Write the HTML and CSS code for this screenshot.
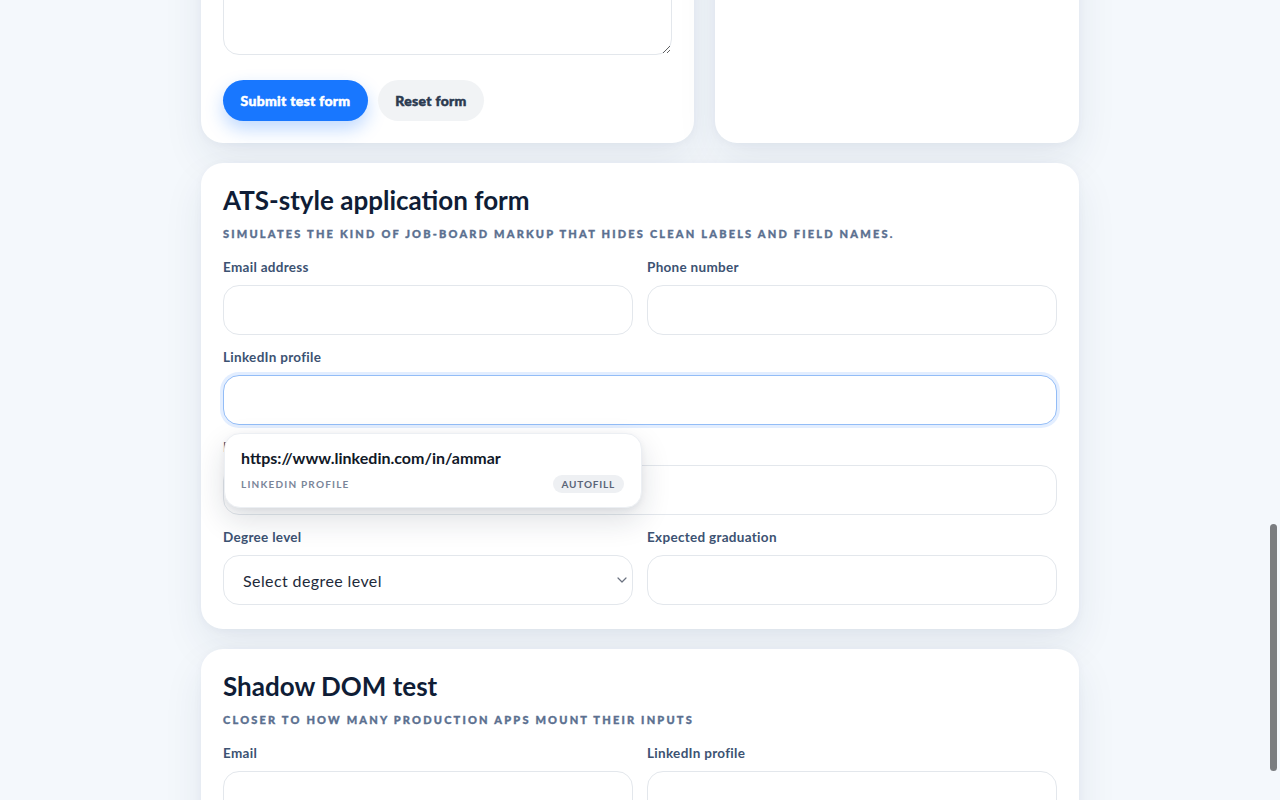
FILE: index.html
```html
<!DOCTYPE html>
<html lang="en">
<head>
    <meta charset="UTF-8">
    <meta name="viewport" content="width=device-width, initial-scale=1.0">
    <title>Autofill Test Forms</title>
    <link rel="stylesheet" href="styles.css">
</head>
<body>
    <main class="page">
        <!-- basic form + side panel -->
        <div class="top-row">
            <section class="card card-form">
                <textarea class="field-area" name="notes"></textarea>
                <div class="actions">
                    <button class="btn btn-primary" type="submit">Submit test form</button>
                    <button class="btn btn-ghost" type="reset">Reset form</button>
                </div>
            </section>
            <aside class="card card-side"></aside>
        </div>

        <section class="card">
            <h2>ATS-style application form</h2>
            <p class="subtitle">Simulates the kind of job-board markup that hides clean labels and field names.</p>
            <div class="fields">
                <div class="field">
                    <label>Email address</label>
                    <input type="text">
                </div>
                <div class="field">
                    <label>Phone number</label>
                    <input type="text">
                </div>
                <div class="field wide has-suggest">
                    <label>LinkedIn profile</label>
                    <input type="text" class="is-focused">
                    <div class="suggest">
                        <div class="suggest-value">https://www.linkedin.com/in/ammar</div>
                        <div class="suggest-meta">
                            <span class="suggest-label">LinkedIn profile</span>
                            <span class="badge">Autofill</span>
                        </div>
                    </div>
                </div>
                <div class="field wide">
                    <label>Portfolio website</label>
                    <input type="text">
                </div>
                <div class="field">
                    <label>Degree level</label>
                    <div class="select-wrap">
                        <select>
                            <option>Select degree level</option>
                        </select>
                        <svg class="chevron" width="10" height="6" viewBox="0 0 10 6"><path d="M1 1l4 4 4-4" fill="none" stroke="#6b7280" stroke-width="1.2" stroke-linecap="round" stroke-linejoin="round"/></svg>
                    </div>
                </div>
                <div class="field">
                    <label>Expected graduation</label>
                    <input type="text">
                </div>
            </div>
        </section>

        <section class="card">
            <h2>Shadow DOM test</h2>
            <p class="subtitle">Closer to how many production apps mount their inputs</p>
            <div class="fields">
                <div class="field">
                    <label>Email</label>
                    <input type="text">
                </div>
                <div class="field">
                    <label>LinkedIn profile</label>
                    <input type="text">
                </div>
            </div>
        </section>
    </main>
    <div class="scroll-thumb"></div>
</body>
</html>
```

FILE: styles.css
```css
html, body {
    height: 100%;
    overflow: hidden;
}
body {
    font-family: 'Lato', 'Noto Sans', sans-serif;
    margin: 0;
    padding: 0;
    background-color: #f4f8fc;
    color: #0f1d36;
}
.page {
    width: 878px;
    margin: -87px auto 0; /* page is scrolled down a bit */
    display: flex;
    flex-direction: column;
    gap: 20px;
}
.top-row {
    display: grid;
    grid-template-columns: minmax(0, 493fr) minmax(0, 364fr);
    gap: 21px;
}
.card {
    background: #ffffff;
    border-radius: 22px;
    padding: 22px 22px 24px;
    box-shadow: 0 18px 40px rgba(30, 50, 90, 0.08), 0 2px 8px rgba(30, 50, 90, 0.04);
}
.card-form {
    padding: 22px;
}
.field-area {
    display: block;
    box-sizing: border-box;
    width: 100%;
    height: 120px;
    border: 1px solid #e3e7ec;
    border-radius: 16px;
    resize: vertical;
    font-family: inherit;
    outline: none;
}
.actions {
    display: flex;
    gap: 10px;
    margin-top: 25px;
}
.btn {
    height: 41px;
    border: none;
    border-radius: 999px;
    font-family: 'Lato', sans-serif;
    font-weight: 900;
    font-size: 14px;
    letter-spacing: 0.3px;
    -webkit-text-stroke: 0.5px currentColor; /* extra heavy look */
    cursor: pointer;
}
.btn-primary {
    width: 145px;
    background-color: #1877ff;
    color: white;
    box-shadow: 0 8px 18px rgba(24, 119, 255, 0.28);
}
.btn-ghost {
    width: 106px;
    background-color: #f1f3f5;
    color: #2b3a50;
}
h2 {
    margin: 0;
    font-size: 26px;
    line-height: 30px;
    font-weight: 700;
    color: #0f1d36;
}
.subtitle {
    margin: 12px 0 0;
    font-size: 11px;
    line-height: 14px;
    font-weight: 900;
    letter-spacing: 2.2px;
    -webkit-text-stroke: 0.35px currentColor;
    text-transform: uppercase;
    color: #5b7090;
}
.fields {
    margin-top: 18px;
    display: grid;
    grid-template-columns: 1fr 1fr;
    gap: 14px;
}
.field {
    display: flex;
    flex-direction: column;
    gap: 10px;
}
.field.wide {
    grid-column: span 2;
}
.has-suggest {
    position: relative;
}
label {
    font-size: 13.5px;
    line-height: 16px;
    font-weight: 700;
    letter-spacing: 0.3px;
    color: #3c5272;
}
input[type="text"], select {
    box-sizing: border-box;
    width: 100%;
    height: 50px;
    border: 1px solid #e3e7ec;
    border-radius: 16px;
    background: #ffffff;
    padding: 0 20px;
    font-family: inherit;
    font-size: 16px;
    color: #1e2a3a;
    outline: none;
}
select {
    appearance: none;
    -webkit-appearance: none;
    letter-spacing: 0.4px;
    padding-left: 19px;
}
input.is-focused {
    border-color: #93bdf7;
    box-shadow: 0 0 0 3px rgba(24, 119, 255, 0.12);
}
.select-wrap {
    position: relative;
}
.chevron {
    position: absolute;
    right: 6px;
    top: 22px;
}
/* autofill suggestion popup */
.suggest {
    position: absolute;
    top: calc(100% + 8px);
    left: 1px;
    width: 418px;
    box-sizing: border-box;
    padding: 14px 17px 14px 16px;
    background: #ffffff;
    border: 1px solid #eceff3;
    border-radius: 16px;
    box-shadow: 0 12px 30px rgba(20, 35, 60, 0.14), 0 2px 6px rgba(20, 35, 60, 0.06);
    z-index: 5;
}
.suggest-value {
    font-size: 16px;
    line-height: 20px;
    font-weight: 700;
    color: #111827;
}
.suggest-meta {
    margin-top: 7px;
    display: flex;
    justify-content: space-between;
    align-items: center;
}
.suggest-label {
    font-size: 10px;
    font-weight: 700;
    letter-spacing: 1.2px;
    text-transform: uppercase;
    color: #7a8599;
}
.badge {
    height: 18px;
    line-height: 18px;
    padding: 0 9px;
    border-radius: 999px;
    background: #eef0f3;
    font-size: 10px;
    font-weight: 700;
    letter-spacing: 0.8px;
    text-transform: uppercase;
    color: #5a6478;
}
.scroll-thumb {
    position: fixed;
    right: 3px;
    top: 524px;
    width: 7px;
    height: 247px;
    border-radius: 4px;
    background: #7a7d80;
}
```
